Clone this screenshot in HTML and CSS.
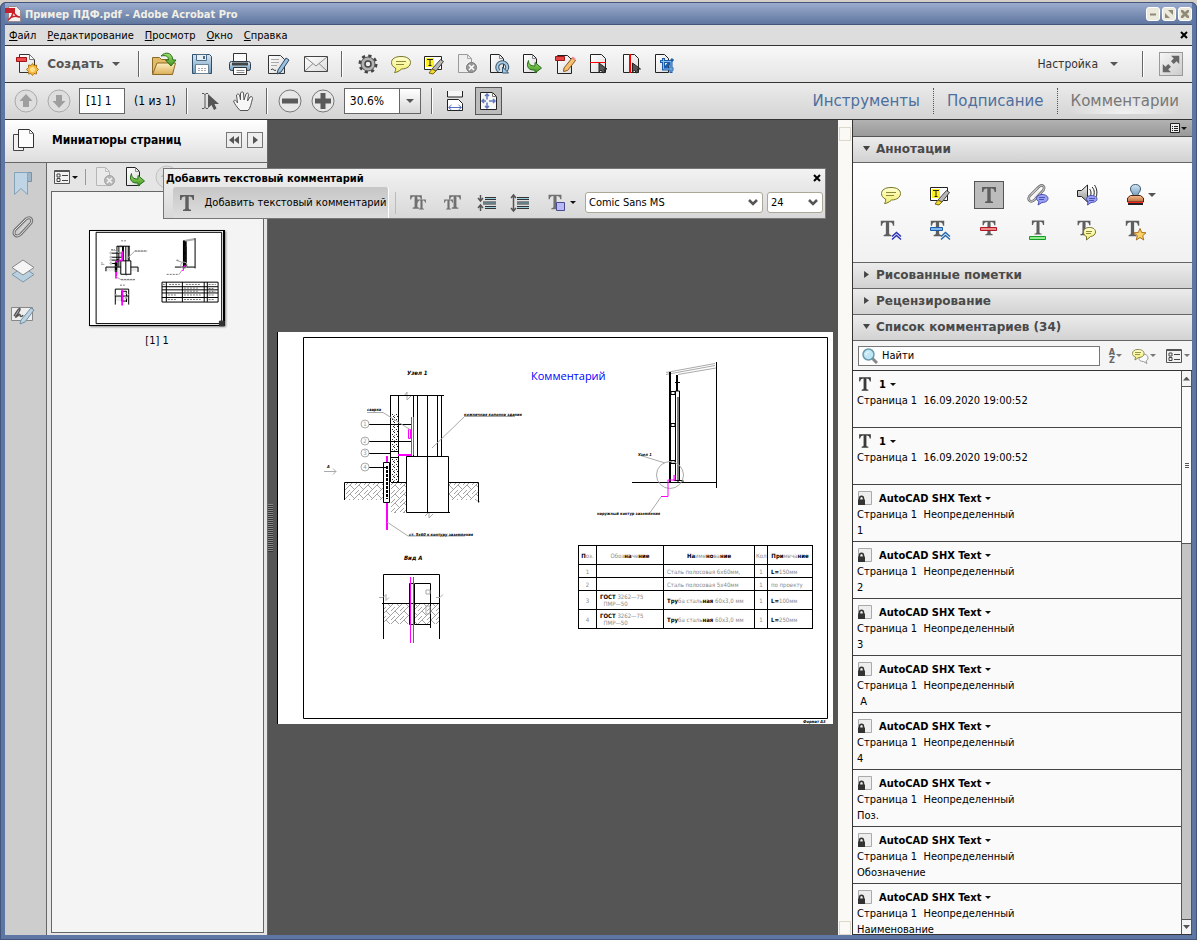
FILE: index.html
```html
<!DOCTYPE html>
<html lang="ru">
<head>
  <meta charset="UTF-8">
  <title>Пример ПДФ.pdf - Adobe Acrobat Pro</title>
  <link rel="stylesheet" href="styles.css">
</head>
<body>

  <!-- Общие градиенты и значки -->
  <svg class="sprite" aria-hidden="true">
    <defs>
      <linearGradient id="gPaper" x1="0" y1="0" x2="1" y2="1"><stop offset="0" stop-color="#fff"/><stop offset="1" stop-color="#dcdcdc"/></linearGradient>
      <linearGradient id="gGray" x1="0" y1="0" x2="0" y2="1"><stop offset="0" stop-color="#f6f6f6"/><stop offset="1" stop-color="#8c8c8c"/></linearGradient>
      <linearGradient id="gBlue" x1="0" y1="0" x2="0" y2="1"><stop offset="0" stop-color="#d5e6f2"/><stop offset="1" stop-color="#6f9cc0"/></linearGradient>
      <linearGradient id="gYellow" x1="0" y1="0" x2="0" y2="1"><stop offset="0" stop-color="#ffffd0"/><stop offset="1" stop-color="#f3ee70"/></linearGradient>
      <linearGradient id="gFolder" x1="0" y1="0" x2="0" y2="1"><stop offset="0" stop-color="#fbefc0"/><stop offset="1" stop-color="#dcae58"/></linearGradient>
      <linearGradient id="gGreen" x1="0" y1="0" x2="0" y2="1"><stop offset="0" stop-color="#a5e070"/><stop offset="1" stop-color="#3d9420"/></linearGradient>
      <linearGradient id="gStamp" x1="0" y1="0" x2="0" y2="1"><stop offset="0" stop-color="#f3bd94"/><stop offset="1" stop-color="#c06a38"/></linearGradient>
      <pattern id="hatch" width="9" height="9" patternUnits="userSpaceOnUse"><path d="M0 9L9 0M0 0L4.500 4.500M5 9l4-4" stroke="#999" stroke-width=".9" fill="none"/></pattern>
      <pattern id="speckle" width="4" height="5" patternUnits="userSpaceOnUse"><path d="M0 .5h1M2 2.500h1M3 4.500h1" stroke="#222"/><path d="M0 3.500h1" stroke="#888"/></pattern>
    </defs>

    <symbol id="i-pdf" viewBox="0 0 16 16"><path d="M3.500 0.500h8l4 4v11h-12z" fill="#f4f0ee" stroke="#9a8a8a"/><path d="M0 2h10v5H0z" fill="#c8202a"/><path d="M7 3c2 5 4 8 8 8M8 5c0 4-2 7-5 9M5 12c3-2 6-2 9-1" fill="none" stroke="#c8202a" stroke-width="1.500"/></symbol>
    <symbol id="i-create" viewBox="0 0 24 24"><path d="M4.500 2.500h10l5 5v13h-15z" fill="url(#gPaper)" stroke="#333"/><path d="M14.500 2.500v5h5z" fill="#fff" stroke="#777"/><path d="M1.500 5.500h10v4h-10z" fill="#ee4a4a" stroke="#9e1515"/><path d="M17.500 11.500l1.500 2 2.500-.5v2.500l2 2-2 2V22l-2.500-.5-1.500 2-1.500-2-2.500.5v-2.500l-2-2 2-2V13l2.500.5z" fill="#f5b840" stroke="#b07818"/><circle cx="17.500" cy="17.500" r="2.500" fill="#ffe08a"/></symbol>
    <symbol id="i-open" viewBox="0 0 26 26"><path d="M1.500 23V6.500h7l2 2h11V23z" fill="#e3bb66" stroke="#8c6a28"/><path d="M1.500 23.500L6 12h18.500l-3 11.500z" fill="url(#gFolder)" stroke="#8c6a28"/><path d="M10 5c4-4.500 11-4 12 4h3l-5 6-5.500-6h3c0-4-3-5-7.500-4z" fill="url(#gGreen)" stroke="#28701a"/></symbol>
    <symbol id="i-save" viewBox="0 0 24 24"><path d="M2.500 2.500h17l2 2v17h-19z" fill="url(#gBlue)" stroke="#2d4d68"/><path d="M6.500 2.500h10v6h-10z" fill="#e7eef4" stroke="#4c6a85"/><path d="M13 4h2v3h-2z" fill="#4c6a85"/><path d="M5.500 12.500h13v9h-13z" fill="#fff" stroke="#6b8399"/><path d="M8 16.500h8M8 18.500h8" stroke="#aaa" stroke-dasharray="2 1"/></symbol>
    <symbol id="i-print" viewBox="0 0 24 24"><path d="M5.500 1.500h13v10h-13z" fill="#fafafa" stroke="#333"/><rect x="1.500" y="9.500" width="21" height="9" rx="2" fill="url(#gBlue)" stroke="#2f3f4e"/><path d="M4 12h16" stroke="#444" stroke-width="3"/><path d="M5.500 15.500h13v7h-13z" fill="#fff" stroke="#333"/><path d="M8.500 18.500h8M8.500 20.500h8" stroke="#888"/></symbol>
    <symbol id="i-edit" viewBox="0 0 24 24"><path d="M2.500 3.500h12l4 4v14h-16z" fill="url(#gPaper)" stroke="#333"/><path d="M5 7.500h8M5 10.500h8M5 13.500h6" stroke="#aaa"/><path d="M12 18l8-12 3 2-8 12-4 2z" fill="#9cc2e0" stroke="#2b4a66"/><path d="M5 18c2-3 3 2 5 0" fill="none" stroke="#222"/></symbol>
    <symbol id="i-mail" viewBox="0 0 26 24"><path d="M1.500 4.500h23v15h-23z" fill="url(#gPaper)" stroke="#444"/><path d="M2 5l11 9 11-9M2 19l8-7.500M24 19l-8-7.500" fill="none" stroke="#8a8a8a"/></symbol>
    <symbol id="i-gear" viewBox="0 0 24 24"><circle cx="12" cy="12" r="8" fill="none" stroke="#444" stroke-width="3" stroke-dasharray="3.200 3.080"/><circle cx="12" cy="12" r="7" fill="#b2b2b2" stroke="#555"/><circle cx="12" cy="12" r="3" fill="#eee" stroke="#444" stroke-width="1.500"/></symbol>
    <symbol id="i-note" viewBox="0 0 24 24"><path d="M12 4.500c6 0 9.500 2.500 9.500 6s-3.500 6.500-9 6.500c-2 2-5 3.500-7 3.500 1-1.500 1.500-3 1-4.500-2.500-1-4-3-4-5.500 0-3.500 3.500-6 9.500-6z" fill="url(#gYellow)" stroke="#77742a"/><path d="M7 9.500h10M7 12.500h8" stroke="#8c883a"/></symbol>
    <symbol id="i-mark" viewBox="0 0 24 24"><path d="M2.500 4.500h17v13h-17z" fill="#fff" stroke="#222"/><path d="M4 6h8v9H4z" fill="#fff022"/><path d="M5 7.500h6M8 7.500v6M6.500 13.500h3" stroke="#222"/><path d="M10 17L18.500 7.500l3 2L14 19z" fill="#b8b8b8" stroke="#444"/><path d="M7 21l3-4 4 2-3 3z" fill="#f2d92e" stroke="#776511"/></symbol>
    <symbol id="i-delete" viewBox="0 0 24 24"><path d="M3.500 2.500h9l4 4v14h-13z" fill="#eee" stroke="#999"/><path d="M12.500 2.500v4h4" fill="none" stroke="#aaa"/><circle cx="16.500" cy="15.500" r="5" fill="#999" stroke="#777"/><path d="M14 13l5 5M19 13l-5 5" stroke="#fff" stroke-width="1.500"/></symbol>
    <symbol id="i-rotate" viewBox="0 0 24 24"><path d="M2.500 2.500h9l4 4v14h-13z" fill="url(#gPaper)" stroke="#222"/><path d="M11.500 2.500v4h4" fill="none" stroke="#888"/><path d="M11 19a5 5 0 1 1 7-.5" fill="none" stroke="#36566f" stroke-width="4"/><path d="M11 19a5 5 0 1 1 7-.5" fill="none" stroke="#a9c9e0" stroke-width="2"/><path d="M14.500 15v6h6z" fill="#a9c9e0" stroke="#36566f"/></symbol>
    <symbol id="i-extract" viewBox="0 0 24 24"><path d="M2.500 2.500h9l4 4v14h-13z" fill="url(#gPaper)" stroke="#222"/><path d="M11.500 2.500v4h4" fill="none" stroke="#888"/><path d="M7.500 8.500c0 4 2 5.500 6.500 5.500v-3.500l6.500 5.500-6.500 5v-3c-6 .5-9.500-3-6.500-9.500z" fill="url(#gGreen)" stroke="#28701a"/></symbol>
    <symbol id="i-pencil" viewBox="0 0 24 24"><path d="M3.500 3.500h10l4 4v14h-14z" fill="url(#gPaper)" stroke="#222"/><path d="M1.500 4.500h9v4h-9z" fill="#e24444" stroke="#a01515"/><path d="M10 16l8-10 3.500 2.500-8 10-4 1z" fill="#f5c074" stroke="#8c5718"/><path d="M17.500 6l1.500-1.500 3 2.500-1.500 1.500z" fill="#ee8f8f"/></symbol>
    <symbol id="i-splith" viewBox="0 0 24 24"><path d="M3.500 2.500h11l4 4v14h-15z" fill="url(#gPaper)" stroke="#222"/><path d="M3 10.500h16" stroke="#f00"/><path d="M12 11v9l2-2 2 3 2-1-1-3h3z" fill="#555" stroke="#222"/></symbol>
    <symbol id="i-splitv" viewBox="0 0 24 24"><path d="M3.500 2.500h11l4 4v14h-15z" fill="url(#gPaper)" stroke="#222"/><path d="M10 2v19" stroke="#f00" stroke-width="2"/><path d="M12.500 11v9l2-2 2 3 2-1-1-3h3z" fill="#555" stroke="#222"/></symbol>
    <symbol id="i-crop" viewBox="0 0 24 24"><path d="M2.500 2.500h9l4 4v14h-13z" fill="url(#gPaper)" stroke="#222"/><path d="M10.500 6v11h10M7 9.500h11V21M20 7l-8 9" fill="none" stroke="#1d5ca8" stroke-width="3"/><path d="M10.500 7v10H20M8 9.500h10V20" fill="none" stroke="#85bdf0"/></symbol>
    <symbol id="i-expand" viewBox="0 0 24 24"><path d="M12 3h9v9l-3-3-3 3-3-3 3-3zM12 21H3v-9l3 3 3-3 3 3-3 3z" fill="#666"/></symbol>
    <symbol id="i-up" viewBox="0 0 24 24"><circle cx="12" cy="12" r="11" fill="#dedede" stroke="#aaa"/><path d="M12 5l6.500 7H15v6H9v-6H5.500z" fill="#9e9e9e"/></symbol>
    <symbol id="i-down" viewBox="0 0 24 24"><circle cx="12" cy="12" r="11" fill="#dedede" stroke="#aaa"/><path d="M12 19l6.500-7H15V6H9v6H5.500z" fill="#9e9e9e"/></symbol>
    <symbol id="i-minus" viewBox="0 0 24 24"><circle cx="12" cy="12" r="11" fill="#e8e8e8" stroke="#777"/><path d="M4 9.500h16v5H4z" fill="#5a5a5a"/></symbol>
    <symbol id="i-plus" viewBox="0 0 24 24"><circle cx="12" cy="12" r="11" fill="#e8e8e8" stroke="#777"/><path d="M4 9.500h5.500V4h5v5.500H20v5h-5.500V20h-5v-5.500H4z" fill="#5a5a5a"/></symbol>
    <symbol id="i-select" viewBox="0 0 24 24"><path d="M4 4.500h2l1 1 1-1h2M7 5v14M4 19.500h2l1-1 1 1h2" fill="none" stroke="#555"/><path d="M10 5v14l3.500-3 2.500 5 2.500-1.500-2-4.500h4.500z" fill="#555"/></symbol>
    <symbol id="i-hand" viewBox="0 0 24 24"><path d="M9 21.500C6 18 3.500 15 2.500 12c1.500-1.500 3-.5 4 2L5.500 6c1-1.500 2.500-1 3 0l1 5V4c1-1.500 2.500-1.500 3 0l.5 7L15 5c1-1.500 2.500-1 2.500.5L16.500 12l2.500-4c1.500-1 3 0 2.500 1.500C20 15 19.500 19 17 21.500z" fill="#f7f7f7" stroke="#555"/></symbol>
    <symbol id="i-fitwidth" viewBox="0 0 24 24"><path d="M4.500 2v6h15V2" fill="#f6f6f6" stroke="#222"/><path d="M4.500 21.500v-11h11l4 4v7z" fill="#fff" stroke="#222"/><path d="M6 18.500h12M8.500 16l-3 2.500 3 2.500M15.500 16l3 2.500-3 2.500" fill="none" stroke="#5570c0"/></symbol>
    <symbol id="i-fitpage" viewBox="0 0 24 24"><path d="M4.500 3.500h12l4 4v13h-16z" fill="#f6f6f6" stroke="#222"/><path d="M16.500 3.500v4h4" fill="none" stroke="#777"/><path d="M11 5.500v5M11 13.500v5M6 12h4M13 12h6M9 7l2-2 2 2M9 17l2 2 2-2M8 10l-2 2 2 2M17 10l2 2-2 2" fill="none" stroke="#6078c0" stroke-width="1.500"/></symbol>

    <symbol id="i-pages" viewBox="0 0 24 24"><path d="M1.500 6.500h10v16h-10z" fill="#f1f1f1" stroke="#444"/><path d="M6.500 1.500h11l4 4v14h-15z" fill="#fdfdfd" stroke="#333"/><path d="M17.500 1.500v4h4" fill="none" stroke="#888"/></symbol>
    <symbol id="i-bookmark" viewBox="0 0 24 24"><path d="M14.500 1.500h6v9h-4z" fill="#9fb6c8" stroke="#7893a9"/><path d="M3.500 1.500h12c2 0 1 2 1 4v18l-6.500-6-6.500 6z" fill="#bfd5e5" stroke="#84a2b8"/></symbol>
    <symbol id="i-clip" viewBox="0 0 24 24"><path d="M6 13L15 4c4-3 7 0 5 4L10 19c-4 4-9 1-6-4l9-9" fill="none" stroke="#767676" stroke-width="3"/><path d="M6 13L15 4c4-3 7 0 5 4L10 19c-4 4-9 1-6-4l9-9M15 9l-6 7" fill="none" stroke="#ddd"/></symbol>
    <symbol id="i-layers" viewBox="0 0 24 24"><path d="M12 8l11 7.500L12 23 1 15.500z" fill="#b8d0e0" stroke="#7d97a9"/><path d="M12 1l11 7.500L12 16 1 8.500z" fill="#f5f5f5" stroke="#888"/></symbol>
    <symbol id="i-sign" viewBox="0 0 24 24"><path d="M.5 4.500h21v13H.5z" fill="#eee" stroke="#888"/><path d="M3 13c2-3 5-9 6-7 0 3-6 9-4 8s4-4 4-2 2 2 3 0" fill="none" stroke="#555" stroke-width="1.500"/><path d="M10 17L20 5l3 2-9 12-5 2z" fill="#bcd3e2" stroke="#7490a5"/></symbol>
    <symbol id="i-list" viewBox="0 0 18 16"><path d="M1.500 1.500h15v13h-15z" fill="#f2f2f2" stroke="#555"/><path d="M1.500 2.500h15" stroke="#555"/><path d="M4 5h3v3H4zM4 9.500h3v3H4z" fill="none" stroke="#444"/><path d="M9 6.500h6M9 11.500h6" stroke="#444"/></symbol>
    <symbol id="i-menu" viewBox="0 0 10 10"><path d="M.5.5h9v9h-9z" fill="#eee" stroke="#222"/><path d="M2 3.500h1M4 3.500h4M2 5.500h1M4 5.500h4M2 7.500h1M4 7.500h4" stroke="#222"/></symbol>

    <symbol id="i-t" viewBox="0 0 24 24"><path d="M5 4h14v5h-1.300c-.4-2.500-1-3.500-4-3.500V17c0 1.500.8 1.500 2.300 1.800V20H8v-1.200c1.500-.3 2.300-.3 2.300-1.800V5.500c-3 0-3.600 1-4 3.500H5z" fill="currentColor"/></symbol>
    <symbol id="i-clipnote" viewBox="0 0 24 24"><use href="#i-clip" width="21" height="21"/><path d="M16 11.500c4 0 6 2 6 4s-2 4-6 4l-4 2.500 1-3.500c-2-1-2.500-2-2.500-3 0-2 2-4 5.500-4z" fill="#9aa0f4" stroke="#4a50b0"/><path d="M13 14.500h6M13 16.500h5" stroke="#4a50b0"/></symbol>
    <symbol id="i-sound" viewBox="0 0 24 24"><path d="M2.500 7.500h4L12.500 2v17l-6-5.500h-4z" fill="url(#gGray)" stroke="#222"/><path d="M14.500 6c2 2 2 6 0 8M17 4c3 3 3 8 0 11M19.500 2c3 4 3 10 1 13" fill="none" stroke="#222"/><path d="M16 12.500c4 0 6 1.500 6 3.500s-2 3.500-6 3.500l-3.500 2.500.5-3.500c-1-1-1.500-1.500-1.500-2.500 0-2 2-3.500 4.500-3.500z" fill="#9aa0f4" stroke="#4a50b0"/><path d="M14 15.500h6M14 17.500h5" stroke="#4a50b0"/></symbol>
    <symbol id="i-stamp" viewBox="0 0 24 24"><path d="M11.500 1.500c3.500 0 5 2 5 4.500 0 3-2.500 4-3 7h-4c-.5-3-3-4-3-7 0-2.500 1.500-4.500 5-4.500z" fill="url(#gBlue)" stroke="#3e5b73"/><path d="M3.500 19v-4l3-2.500h10l3 2.500v4z" fill="url(#gStamp)" stroke="#4d2410"/><path d="M4 19.500h15" stroke="#f22"/><path d="M4 21h15" stroke="#222" stroke-width="2"/></symbol>
    <symbol id="i-tinsert" viewBox="0 0 24 24"><use href="#i-t" x="-3" y="-2" width="23" height="23"/><path d="M13 17.500l4.500-4 4.500 4M13 20.500l4.500-4 4.500 4" fill="none" stroke="#2a30b8" stroke-width="1.500"/></symbol>
    <symbol id="i-treplace" viewBox="0 0 24 24"><use href="#i-t" x="-2" y="-2" width="23" height="23"/><path d="M2.500 8.500h12v3h-12z" fill="#7fb6ee" stroke="#1d5ca8"/><path d="M13 17.500l4.500-4 4.500 4M13 20.500l4.500-4 4.500 4" fill="none" stroke="#2468b0" stroke-width="1.500"/></symbol>
    <symbol id="i-tstrike" viewBox="0 0 24 24"><use href="#i-t" y="-2" width="24" height="22"/><path d="M3.500 8.500h16v3h-16z" fill="#f08a8a" stroke="#b01828"/></symbol>
    <symbol id="i-tunder" viewBox="0 0 24 24"><use href="#i-t" y="-2" width="24" height="21"/><path d="M3.500 17.500h16v3h-16z" fill="#8fec8f" stroke="#159a28"/></symbol>
    <symbol id="i-tnote" viewBox="0 0 24 24"><use href="#i-t" x="-2" y="-2" width="22" height="22"/><path d="M14.500 8.500c4 0 6 2 6 4.500s-2 4-5 4.500l-4 3.500v-3.500c-2-1-3-2-3-4.500s2-4.500 6-4.500z" fill="url(#gYellow)" stroke="#77742a"/><path d="M11 12.500h6M11 14.500h5" stroke="#8c883a"/></symbol>
    <symbol id="i-tstar" viewBox="0 0 24 24"><use href="#i-t" x="-3" y="-2" width="23" height="23"/><path d="M16 9.500l1.700 4 4.300.3-3.300 2.800 1 4.400L16 18.500 12.300 21l1-4.400-3.300-2.800 4.300-.3z" fill="#fbd26a" stroke="#a8721a"/></symbol>
    <symbol id="i-search" viewBox="0 0 16 16"><path d="M10 10l5 5" stroke="#888" stroke-width="3"/><circle cx="6.500" cy="6.500" r="5.500" fill="#bfe6f4" stroke="#6b9aae" stroke-width="1.500"/><path d="M4 7c0-2 1-3 3-3" stroke="#fff" fill="none"/></symbol>
    <symbol id="i-filter" viewBox="0 0 18 16"><path d="M12 6c3 0 5 1.500 5 4 0 1.500-1 2.500-2 3l1 2.500-3.500-2c-3 0-4.500-1-4.500-3.500S9.500 6 12 6z" fill="#fafafa" stroke="#999"/><path d="M7 1.500c4 0 6 1.500 6 4s-2 4-5.500 4L4 12l.5-3c-2-.5-3-2-3-3.500 0-2.500 2-4 5.500-4z" fill="url(#gYellow)" stroke="#8c8850"/><path d="M4 4.500h6M4 6.500h5" stroke="#99954a"/></symbol>
    <symbol id="i-lock" viewBox="0 0 16 16"><path d="M1.500 1.500h13v13h-13z" fill="#eee" stroke="#aaa"/><path d="M2.500 10V8.500c0-3 4-3 4 0V10" fill="none" stroke="#333" stroke-width="1.500"/><path d="M1 9.500h7V15H1z" fill="#333"/></symbol>
    <symbol id="i-arrow" viewBox="0 0 8 4"><path d="M0 0h8L4 4z" fill="currentColor"/></symbol>
    <symbol id="i-chev" viewBox="0 0 10 8"><path d="M1 1l4 4 4-4" fill="none" stroke="#555" stroke-width="2.500"/></symbol>
    <symbol id="i-cross" viewBox="0 0 8 8"><path d="M1 1l6 6M7 1L1 7" stroke="currentColor" stroke-width="2"/></symbol>

    <!-- Чертёж листа, координаты в единицах листа 555 x 392 -->
    <symbol id="drawing" viewBox="0 0 555 392">
      <g class="ink">
        <path d="M25.500 5.500h524v381h-524z"/>
        <path class="soft" d="M147 184l4-4v6l4-4M126 64l3-4v8l4-4M198 168l4 2"/>
        <path fill="url(#speckle)" stroke="none" d="M113 81h7v38h-7zM113 125h7v25h-7z"/>
        <path fill="url(#hatch)" stroke="none" d="M67 151h38v17H67zM113 151h15v30h-15zM170 151h31v17h-31zM106 272h25v20h-25zM137 272h24v20h-24z"/>
        <path d="M112 63.500h54M112.500 63v87M120.500 63v87M135.500 63v61M139.500 63v61M149.500 63v117M159.500 63v61M163.500 63v61M112 119.500h8M112 125.500h8"/>
        <path d="M172 180.500h-43.500v-56h42v56M66.500 168v-17.500h40M113 150.500h16M170 150.500h30.500v20"/>
        <path d="M105.500 130.500h6v40h-6z" fill="#fff"/>
        <path d="M91 92.500h42M91 109.500h42M91 121.500h21M91 135.500h18"/>
        <path class="dash" d="M109 134v33"/>
        <path class="pink wide" d="M109 124v6M109 171v27M120 123h14"/>
        <path class="pink" d="M133.500 85v38M135.500 85v38M130.500 97.500h2v9h-2z"/>
        <path class="soft" d="M89 80.500h16l27 17M186 84.500h51M186 85l-32 31M109 190l21 14h57M46 139.500h12l-3-3m3 3l-3 3"/>
        <circle class="soft" cx="87" cy="92" r="4"/><circle class="soft" cx="87" cy="109" r="4"/><circle class="soft" cx="87" cy="121" r="4"/><circle class="soft" cx="87" cy="135" r="4"/>
        <path d="M105.500 307v-64.500h56V307M104 271.500h57M131.500 251.500h5v41h-5zM137 251.500h15.500V296M137 292.500h16"/>
        <path class="pink" d="M132.500 245v66M135.500 245v66"/>
        <path class="soft" d="M101 265.500h4l3-3v6l3-3M158 265.500h4l3-3M148 258h4v4h-4zM148 274h4v8h-4z"/>
        <path class="soft" d="M388 40.500l49-9M388 42.500l49-9M400 42.500l38-6.500M361 123l26 8M371 182l12-17"/>
        <path class="wide" d="M392 40v111"/><path class="wide" d="M399 43v16"/>
        <path d="M397.500 148v-89h4v89M400 65v85M354 150.500h84M438.500 30v126M393 59.500h4v3h-4zM393 91.500h4v3h-4zM393 128.500h4v3h-4zM396 148.500h9v2M397 50.500h5"/>
        <circle class="soft" cx="392" cy="143" r="13.500"/>
        <path class="pink" d="M397 143v5h-7v16.500h-7"/>
        <path class="pink" d="M396 143v6"/>
      </g>
    </symbol>
  </svg>

  <div class="window">

    <header class="title-bar">
      <svg class="app-icon"><use href="#i-pdf"/></svg>
      <h1>Пример ПДФ.pdf - Adobe Acrobat Pro</h1>
      <button type="button" class="win-btn" aria-label="Свернуть"><svg viewBox="0 0 10 10"><path d="M2 4.500h6v2H2z"/></svg></button>
      <button type="button" class="win-btn" aria-label="Восстановить"><svg viewBox="0 0 10 10"><path d="M4 1h5v5zM1 4v5h5z"/></svg></button>
      <button type="button" class="win-btn" aria-label="Закрыть"><svg viewBox="0 0 10 10"><path d="M1 1h2l2 2 2-2h2v2L7 5l2 2v2H7L5 7 3 9H1V7l2-2-2-2z"/></svg></button>
    </header>

    <nav class="menu-bar">
      <a href="#"><u>Ф</u>айл</a>
      <a href="#"><u>Р</u>едактирование</a>
      <a href="#"><u>П</u>росмотр</a>
      <a href="#"><u>О</u>кно</a>
      <a href="#"><u>С</u>правка</a>
      <button type="button" class="close" aria-label="Закрыть документ"><svg><use href="#i-cross"/></svg></button>
    </nav>

    <!-- Первая панель инструментов -->
    <div class="toolbar top">
      <button type="button" class="create"><svg class="ico"><use href="#i-create"/></svg>Создать<svg class="arrow"><use href="#i-arrow"/></svg></button>
      <span class="sep"></span>
      <div class="group files">
        <button type="button" aria-label="Открыть"><svg class="ico big"><use href="#i-open"/></svg></button>
        <button type="button" aria-label="Сохранить"><svg class="ico"><use href="#i-save"/></svg></button>
        <button type="button" aria-label="Печать"><svg class="ico"><use href="#i-print"/></svg></button>
        <button type="button" aria-label="Подписать"><svg class="ico"><use href="#i-edit"/></svg></button>
        <button type="button" aria-label="Отправить"><svg class="ico big"><use href="#i-mail"/></svg></button>
      </div>
      <span class="sep"></span>
      <div class="group">
        <button type="button" aria-label="Параметры"><svg class="ico"><use href="#i-gear"/></svg></button>
        <button type="button" aria-label="Записка"><svg class="ico"><use href="#i-note"/></svg></button>
        <button type="button" aria-label="Выделить текст"><svg class="ico"><use href="#i-mark"/></svg></button>
        <button type="button" aria-label="Удалить страницу" disabled><svg class="ico"><use href="#i-delete"/></svg></button>
        <button type="button" aria-label="Повернуть"><svg class="ico"><use href="#i-rotate"/></svg></button>
        <button type="button" aria-label="Извлечь"><svg class="ico"><use href="#i-extract"/></svg></button>
        <button type="button" aria-label="Редактировать"><svg class="ico"><use href="#i-pencil"/></svg></button>
        <button type="button" aria-label="Разделить по горизонтали"><svg class="ico"><use href="#i-splith"/></svg></button>
        <button type="button" aria-label="Разделить по вертикали"><svg class="ico"><use href="#i-splitv"/></svg></button>
        <button type="button" aria-label="Обрезать"><svg class="ico"><use href="#i-crop"/></svg></button>
      </div>
      <button type="button" class="customize">Настройка<svg class="arrow"><use href="#i-arrow"/></svg></button>
      <span class="sep"></span>
      <button type="button" class="expand" aria-label="Режим чтения"><svg><use href="#i-expand"/></svg></button>
    </div>

    <!-- Вторая панель: навигация и масштаб -->
    <div class="toolbar nav">
      <div class="group">
        <button type="button" aria-label="Назад" disabled><svg class="ico"><use href="#i-up"/></svg></button>
        <button type="button" aria-label="Вперёд" disabled><svg class="ico"><use href="#i-down"/></svg></button>
      </div>
      <input class="page-num" type="text" value="[1] 1" aria-label="Номер страницы">
      <span class="page-count">(1 из 1)</span>
      <span class="sep"></span>
      <div class="group tools">
        <button type="button" aria-label="Выделение"><svg class="ico"><use href="#i-select"/></svg></button>
        <button type="button" aria-label="Рука"><svg class="ico"><use href="#i-hand"/></svg></button>
      </div>
      <span class="sep"></span>
      <div class="group tools">
        <button type="button" aria-label="Уменьшить"><svg class="ico"><use href="#i-minus"/></svg></button>
        <button type="button" aria-label="Увеличить"><svg class="ico"><use href="#i-plus"/></svg></button>
      </div>
      <div class="zoom">
        <input type="text" value="30.6%" aria-label="Масштаб">
        <button type="button" aria-label="Выбрать масштаб"><svg class="arrow"><use href="#i-arrow"/></svg></button>
      </div>
      <span class="sep"></span>
      <div class="group tools">
        <button type="button" aria-label="По ширине"><svg class="ico"><use href="#i-fitwidth"/></svg></button>
        <button type="button" class="pressed" aria-label="По странице"><svg class="ico"><use href="#i-fitpage"/></svg></button>
      </div>
      <div class="tabs">
        <a href="#">Инструменты</a>
        <a href="#">Подписание</a>
        <a href="#" class="current">Комментарии</a>
      </div>
    </div>

    <main class="workspace">

      <!-- Миниатюры -->
      <aside class="side">
        <div class="side-head">
          <svg class="ico"><use href="#i-pages"/></svg>
          <h2>Миниатюры страниц</h2>
          <button type="button" aria-label="Свернуть"><svg viewBox="0 0 12 12"><path d="M6 2v8L1 6zM11 2v8L6 6z"/></svg></button>
          <button type="button" aria-label="Развернуть"><svg viewBox="0 0 12 12"><path d="M4 2v8l5-4z"/></svg></button>
        </div>
        <div class="side-body">
          <div class="side-tabs">
            <button type="button" aria-label="Закладки"><svg class="ico"><use href="#i-bookmark"/></svg></button>
            <button type="button" aria-label="Вложения"><svg class="ico"><use href="#i-clip"/></svg></button>
            <button type="button" aria-label="Слои"><svg class="ico"><use href="#i-layers"/></svg></button>
            <button type="button" aria-label="Подписи"><svg class="ico"><use href="#i-sign"/></svg></button>
          </div>
          <div class="thumbs">
            <div class="thumb-tools">
              <button type="button" class="menu" aria-label="Параметры"><svg class="list-ico"><use href="#i-list"/></svg><svg class="arrow small"><use href="#i-arrow"/></svg></button>
              <span class="thin-sep"></span>
              <button type="button" class="off" aria-label="Удалить" disabled><svg class="ico"><use href="#i-delete"/></svg></button>
              <button type="button" aria-label="Извлечь"><svg class="ico"><use href="#i-extract"/></svg></button>
              <button type="button" class="off" aria-label="Повернуть влево" disabled><svg class="ico"><use href="#i-up"/></svg></button>
            </div>
            <div class="thumb-list">
              <figure class="thumb">
                <svg class="thumb-page" viewBox="0 0 555 392">
                  <use href="#drawing" width="555" height="392"/>
                  <g class="ink">
                    <path d="M300.500 213.500h234v83h-234zM300 232.500h234M300 245.500h234M300 258.500h234M300 277.500h234M318.500 213v83M385.500 213v83M476.500 213v83M489.500 213v83"/>
                    <path class="blur" d="M130 41h20M88 78h16M187 83h52M130 202h58M125 226h20M361 122h10M320 181h51M330 223h45M400 223h60M495 223h30M392 238h60M392 251h60M392 267h70M392 286h70M325 267h35M325 286h35M495 240h20M495 252h28M495 267h22M495 286h22M304 223h8M47 133h5"/>
                    <path d="M540 376h20v20h-20z" fill="#333" stroke="#333"/>
                  </g>
                </svg>
                <figcaption>[1] 1</figcaption>
              </figure>
            </div>
          </div>
        </div>
      </aside>

      <!-- Документ -->
      <section class="document">
        <div class="grip-col"><span class="grip"></span></div>
        <svg class="page" viewBox="0 0 555 392">
          <use href="#drawing" width="555" height="392"/>
          <g class="cad-text">
            <text x="129" y="43">Узел 1</text>
            <text x="126" y="228">Вид А</text>
            <g class="tiny">
              <text x="89" y="79">сварка</text>
              <text x="186" y="84">кожничная колонна здания</text>
              <text x="131" y="204">ст. 5х60 к контуру заземления</text>
              <text x="49" y="136">А</text>
              <text x="360" y="124">Узел 1</text>
              <text x="319" y="183">наружный контур заземления</text>
              <text x="525" y="391">Формат А3</text>
            </g>
            <g class="num">
              <text x="87" y="94">1</text><text x="87" y="111">2</text><text x="87" y="123">3</text><text x="87" y="137">4</text>
            </g>
          </g>
          <text class="comment-text" x="253" y="48">Комментарий</text>
          <foreignObject x="300" y="213" width="236" height="86">
            <table class="parts">
              <thead>
                <tr><th class="c-pos"><b>П</b>оз.</th><th class="c-code">Обоз<b>на</b>че<b>ние</b></th><th class="c-name"><b>На</b>име<b>но</b>ва<b>ние</b></th><th class="c-pos">Кол</th><th class="c-note"><b>При</b>меча<b>ние</b></th></tr>
              </thead>
              <tbody>
                <tr><td>1</td><td></td><td>Сталь полосовая 6х60мм,</td><td>1</td><td><b>L=</b>150мм</td></tr>
                <tr><td>2</td><td></td><td>Сталь полосовая 5х40мм</td><td>1</td><td>по проекту</td></tr>
                <tr class="tall"><td>3</td><td><b>ГОСТ</b> 3262—75<br>&nbsp; ПМР—50</td><td><b>Тру</b>ба сталь<b>ная</b> 60х3,0 мм</td><td>1</td><td><b>L=</b>100мм</td></tr>
                <tr class="tall"><td>4</td><td><b>ГОСТ</b> 3262—75<br>&nbsp; ПМР—50</td><td><b>Тру</b>ба сталь<b>ная</b> 60х3,0 мм</td><td>1</td><td><b>L=</b>250мм</td></tr>
              </tbody>
            </table>
          </foreignObject>
        </svg>
        <div class="doc-scroll"><span></span><span></span></div>
      </section>

      <!-- Комментарии -->
      <aside class="comments">
        <div class="panel-strip">
          <button type="button" aria-label="Меню панели"><svg class="strip-ico"><use href="#i-menu"/></svg><svg class="arrow small"><use href="#i-arrow"/></svg></button>
        </div>
        <h2><button type="button" class="fold open">Аннотации</button></h2>
        <div class="tool-grid">
          <button type="button" aria-label="Записка"><svg class="ico"><use href="#i-note"/></svg></button>
          <button type="button" aria-label="Выделение"><svg class="ico"><use href="#i-mark"/></svg></button>
          <button type="button" class="pressed" aria-label="Текстовый комментарий"><svg class="ico"><use href="#i-t"/></svg></button>
          <button type="button" aria-label="Вложить файл"><svg class="ico"><use href="#i-clipnote"/></svg></button>
          <button type="button" aria-label="Звук"><svg class="ico"><use href="#i-sound"/></svg></button>
          <button type="button" aria-label="Штамп"><svg class="ico"><use href="#i-stamp"/></svg></button>
          <button type="button" class="drop" aria-label="Выбрать штамп"><svg class="arrow"><use href="#i-arrow"/></svg></button>
          <button type="button" aria-label="Вставить текст"><svg class="ico"><use href="#i-tinsert"/></svg></button>
          <button type="button" aria-label="Заменить текст"><svg class="ico"><use href="#i-treplace"/></svg></button>
          <button type="button" aria-label="Зачеркнуть"><svg class="ico"><use href="#i-tstrike"/></svg></button>
          <button type="button" aria-label="Подчеркнуть"><svg class="ico"><use href="#i-tunder"/></svg></button>
          <button type="button" aria-label="Примечание к тексту"><svg class="ico"><use href="#i-tnote"/></svg></button>
          <button type="button" aria-label="Исправления"><svg class="ico"><use href="#i-tstar"/></svg></button>
        </div>
        <h2><button type="button" class="fold">Рисованные пометки</button></h2>
        <h2><button type="button" class="fold">Рецензирование</button></h2>
        <h2><button type="button" class="fold open">Список комментариев (34)</button></h2>

        <div class="find-row">
          <label class="find"><svg><use href="#i-search"/></svg><input type="text" value="Найти" aria-label="Найти"></label>
          <button type="button" aria-label="Сортировка"><span class="az">A<br>Z</span><svg class="arrow small"><use href="#i-arrow"/></svg></button>
          <button type="button" aria-label="Фильтр"><svg class="list-ico"><use href="#i-filter"/></svg><svg class="arrow small"><use href="#i-arrow"/></svg></button>
          <button type="button" aria-label="Параметры списка"><svg class="list-ico"><use href="#i-list"/></svg><svg class="arrow small"><use href="#i-arrow"/></svg></button>
        </div>

        <div class="list-wrap">
          <ul class="comment-list">
            <li><h3><svg class="t"><use href="#i-t"/></svg>1<svg class="arrow small"><use href="#i-arrow"/></svg></h3><p>Страница 1&nbsp; 16.09.2020 19:00:52</p></li>
            <li><h3><svg class="t"><use href="#i-t"/></svg>1<svg class="arrow small"><use href="#i-arrow"/></svg></h3><p>Страница 1&nbsp; 16.09.2020 19:00:52</p></li>
            <li><h3><svg><use href="#i-lock"/></svg>AutoCAD SHX Text<svg class="arrow small"><use href="#i-arrow"/></svg></h3><p>Страница 1&nbsp; Неопределенный</p><p>1</p></li>
            <li><h3><svg><use href="#i-lock"/></svg>AutoCAD SHX Text<svg class="arrow small"><use href="#i-arrow"/></svg></h3><p>Страница 1&nbsp; Неопределенный</p><p>2</p></li>
            <li><h3><svg><use href="#i-lock"/></svg>AutoCAD SHX Text<svg class="arrow small"><use href="#i-arrow"/></svg></h3><p>Страница 1&nbsp; Неопределенный</p><p>3</p></li>
            <li><h3><svg><use href="#i-lock"/></svg>AutoCAD SHX Text<svg class="arrow small"><use href="#i-arrow"/></svg></h3><p>Страница 1&nbsp; Неопределенный</p><p>&nbsp;А</p></li>
            <li><h3><svg><use href="#i-lock"/></svg>AutoCAD SHX Text<svg class="arrow small"><use href="#i-arrow"/></svg></h3><p>Страница 1&nbsp; Неопределенный</p><p>4</p></li>
            <li><h3><svg><use href="#i-lock"/></svg>AutoCAD SHX Text<svg class="arrow small"><use href="#i-arrow"/></svg></h3><p>Страница 1&nbsp; Неопределенный</p><p>Поз.</p></li>
            <li><h3><svg><use href="#i-lock"/></svg>AutoCAD SHX Text<svg class="arrow small"><use href="#i-arrow"/></svg></h3><p>Страница 1&nbsp; Неопределенный</p><p>Обозначение</p></li>
            <li><h3><svg><use href="#i-lock"/></svg>AutoCAD SHX Text<svg class="arrow small"><use href="#i-arrow"/></svg></h3><p>Страница 1&nbsp; Неопределенный</p><p>Наименование</p></li>
          </ul>
          <div class="scroll"><span class="sb up"></span><span class="sb-thumb"></span><span class="sb down"></span></div>
        </div>
      </aside>

      <!-- Плавающая панель поверх документа -->
      <div class="float-bar">
        <div class="float-head">
          <h2>Добавить текстовый комментарий</h2>
          <button type="button" aria-label="Закрыть"><svg><use href="#i-cross"/></svg></button>
        </div>
        <div class="float-body">
          <button type="button" class="active"><svg class="ico"><use href="#i-t"/></svg>Добавить текстовый комментарий</button>
          <span class="thin-sep"></span>
          <button type="button" aria-label="Мельче"><svg class="fi" viewBox="0 0 24 24"><use href="#i-t" x="-1" y="1" width="20" height="20"/><use href="#i-t" x="7" y="6" width="15" height="15"/></svg></button>
          <button type="button" aria-label="Крупнее"><svg class="fi" viewBox="0 0 24 24"><use href="#i-t" x="0" y="6" width="15" height="15"/><use href="#i-t" x="4" y="1" width="20" height="20"/></svg></button>
          <button type="button" aria-label="Уменьшить интервал"><svg class="fi" viewBox="0 0 24 24"><path d="M5.500 4v5M3 7l2.500 3L8 7M5.500 20v-5M3 17l2.500-3L8 17" fill="none" stroke="#555" stroke-width="1.500"/><path d="M10 7.500h11M8 12h13M10 16.500h11" stroke="#333" stroke-width="3"/><path d="M10 7.500h11M8 12h13M10 16.500h11" stroke="#9cd"/></svg></button>
          <button type="button" aria-label="Увеличить интервал"><svg class="fi" viewBox="0 0 24 24"><path d="M4.500 4v16M2 7l2.500-3L7 7M2 17l2.500 3L7 17" fill="none" stroke="#555" stroke-width="1.500"/><path d="M8 7.500h12M8 12h12M8 16.500h12" stroke="#333" stroke-width="3"/><path d="M8 7.500h12M8 12h12M8 16.500h12" stroke="#9cd"/></svg></button>
          <button type="button" class="color" aria-label="Цвет текста"><svg class="fi" viewBox="0 0 24 24"><use href="#i-t" x="0" y="0" width="22" height="22"/><path d="M12.500 11.500h8v8h-8z" fill="#b9b9f5" stroke="#4a4a90"/></svg><svg class="arrow small"><use href="#i-arrow"/></svg></button>
          <label class="combo font"><select aria-label="Шрифт"><option>Comic Sans MS</option></select><svg><use href="#i-chev"/></svg></label>
          <label class="combo size"><select aria-label="Размер"><option>24</option></select><svg><use href="#i-chev"/></svg></label>
        </div>
      </div>
    </main>
  </div>

</body>
</html>
```
FILE: styles.css
```css
* {
  box-sizing: border-box;
}

body {
  margin: 0;
  height: 100vh;
  padding-top: 2px;
  overflow: hidden;
  background: #d4d0c8;
  font-family: "DejaVu Sans Condensed", "DejaVu Sans", sans-serif;
  font-size: 11px;
  color: #000;
}

h1, h2, h3, p, ul, figure {
  margin: 0;
  padding: 0;
  font-size: 11px;
}

button, input, select {
  font: inherit;
  color: inherit;
}

button {
  display: flex;
  align-items: center;
  justify-content: center;
  padding: 0;
  border: 0;
  background: none;
  white-space: nowrap;
}

a {
  color: inherit;
  text-decoration: none;
}

svg {
  display: block;
  flex: none;
}

.sprite {
  position: absolute;
  width: 0;
  height: 0;
}

.ico {
  width: 24px;
  height: 24px;
  color: #5e5e5e;
}

.ico.big {
  width: 26px;
  height: 26px;
}

.arrow {
  width: 8px;
  height: 4px;
  color: #555;
}

.arrow.small {
  width: 6px;
  height: 3px;
  color: #111;
}

/* окно */
.window {
  height: 100%;
  display: flex;
  flex-direction: column;
  border: solid #5d76a3;
  border-width: 0 5px 5px;
  border-radius: 6px 6px 0 0;
  background: #5d76a3;
  outline: 1px solid #43557a;
  outline-offset: -1px;
}

.title-bar {
  display: flex;
  align-items: center;
  gap: 2px;
  height: 23px;
  padding-top: 1px;
  border-top: 1px solid #43557a;
  border-bottom: 1px solid #43557a;
  background: linear-gradient(#9cadce, #5f769f);
  color: #f2f0e6;
}

.title-bar h1 {
  flex: 1;
  padding-left: 2px;
}

.app-icon {
  width: 16px;
  height: 16px;
}

.win-btn {
  width: 14px;
  height: 14px;
  border: 1px solid #fff;
  border-radius: 3px;
  background: #ece9dd;
}

.win-btn svg {
  width: 10px;
  height: 10px;
  fill: #8f8b78;
}

.menu-bar {
  display: flex;
  align-items: center;
  gap: 11px;
  height: 21px;
  padding: 0 4px;
  border-bottom: 1px solid #333;
  background: #ddd;
}

.close {
  margin-left: auto;
}

.close svg, .float-head svg {
  width: 8px;
  height: 8px;
}

/* панели инструментов */
.toolbar {
  display: flex;
  align-items: center;
  height: 37px;
  border-bottom: 1px solid #333;
  background: linear-gradient(#f8f8f8, #e4e4e4);
}

.toolbar.nav {
  background: linear-gradient(#ebebeb, #d4d4d4);
}

.sep {
  width: 2px;
  height: 26px;
  border-left: 1px solid #666;
  border-right: 1px solid #fff;
}

.thin-sep {
  width: 1px;
  height: 16px;
  background: #999;
}

.group {
  display: flex;
}

.group button {
  width: 33px;
  height: 28px;
}

.group.files {
  padding: 0 6px 0 5px;
}

.group.files button {
  width: 38px;
}

.top .group:not(.files) {
  padding-left: 8px;
}

.create {
  gap: 8px;
  width: 133px;
  padding-right: 8px;
  font-family: "DejaVu Sans", sans-serif;
  font-size: 12px;
  font-weight: bold;
  color: #555;
}

.customize {
  gap: 12px;
  margin-left: auto;
  margin-right: 24px;
  font-size: 12px;
  color: #333;
}

.expand {
  width: 24px;
  height: 24px;
  margin: 0 9px 0 15px;
  border: 1px solid #999;
  background: linear-gradient(135deg, #f6f6f6, #ccc);
}

.expand svg {
  width: 22px;
  height: 22px;
}

.nav .group:first-child {
  padding: 0 4px;
}

.page-num {
  width: 46px;
  height: 26px;
  border: 1px solid #666;
  padding: 0 6px;
  background: #fff;
  font-size: 12px;
}

.page-count {
  padding: 0 10px 0 9px;
  font-size: 12px;
}

.group.tools {
  padding: 0 6px;
}

.zoom {
  display: flex;
  width: 77px;
  height: 26px;
  border: 1px solid #666;
  background: #fff;
  margin: 0 10px 0 -2px;
}

.zoom input {
  width: 54px;
  border: 0;
  padding: 0 5px;
  background: #fff;
  font-size: 12px;
}

.zoom button {
  flex: 1;
  border-left: 1px solid #666;
  background: linear-gradient(#fff, #d8d8d8);
}

.group button.pressed, .tool-grid .pressed {
  border: 1px solid #555;
  background: #bcbcbc;
}

.nav .pressed {
  width: 27px;
  margin-left: 3px;
}

.tabs {
  display: flex;
  align-items: center;
  margin-left: auto;
  font-family: "DejaVu Sans", sans-serif;
  font-size: 15px;
  color: #4d6f9d;
}

.tabs a {
  padding: 4px 13px;
}

.tabs a + a {
  border-left: 1px dotted #555;
}

.tabs .current {
  color: #777;
  background: radial-gradient(ellipse at 50% 110%, #f4f4f4, transparent 60%);
}

/* рабочая область */
.workspace {
  position: relative;
  flex: 1;
  min-height: 0;
  display: flex;
  background: #555;
}

.side {
  flex: none;
  width: 263px;
  display: flex;
  flex-direction: column;
  border-right: 1px solid #666;
  background: #e5e5e5;
}

.side-head {
  display: flex;
  align-items: center;
  height: 43px;
  padding: 0 4px 2px 7px;
  border-bottom: 1px solid #666;
  background: linear-gradient(#fff, #dedede);
}

.side-head h2 {
  flex: 1;
  padding-left: 16px;
  font-size: 12px;
}

.side-head button {
  width: 16px;
  height: 16px;
  margin-left: 5px;
  border: 1px solid #777;
  background: #eee;
}

.side-head button svg {
  width: 12px;
  height: 12px;
  fill: #555;
}

.side-body {
  flex: 1;
  min-height: 0;
  display: flex;
}

.side-tabs {
  display: flex;
  flex-direction: column;
  align-items: center;
  gap: 20px;
  width: 42px;
  padding: 8px 5px 0 0;
  border-right: 1px solid #666;
  background: #cdcdcd;
}

.thumbs {
  flex: 1;
  display: flex;
  flex-direction: column;
  padding: 0 3px 2px 4px;
}

.thumb-tools {
  display: flex;
  align-items: center;
  gap: 7px;
  height: 28px;
  padding-left: 2px;
}

.thumb-tools .menu {
  gap: 1px;
}

.thumb-tools .off {
  opacity: 0.6;
}

.thumb-list {
  flex: 1;
  border: 1px solid #666;
  background: #f4f4f4;
}

.list-ico {
  width: 18px;
  height: 16px;
}

.thumb {
  width: 136px;
  margin: 38px auto 0 37px;
  text-align: center;
}

.thumb-page {
  width: 100%;
  overflow: visible;
  background: #fff;
  border: 1px solid #000;
  border-right-width: 2px;
  box-shadow: 1px 1px 2px #888;
}

.thumb figcaption {
  padding-top: 8px;
  line-height: 14px;
}

/* линии чертежа */
.ink {
  fill: none;
  stroke: #000;
}

.ink path, .ink circle {
  vector-effect: non-scaling-stroke;
}

.ink .soft {
  stroke: #aaa;
}

.ink .pink {
  stroke: #f0f;
}

.ink .wide {
  stroke-width: 2;
}

.ink .dash {
  stroke-width: 2;
  stroke-dasharray: 3 1;
}

.ink .blur {
  stroke: #777;
  stroke-dasharray: 2 1;
}

/* документ */
.document {
  flex: 1;
  min-width: 0;
  display: flex;
  align-items: center;
}

.grip-col {
  width: 10px;
  flex: none;
}

.grip {
  display: block;
  width: 5px;
  height: 48px;
  background: repeating-linear-gradient(#888 0 1px, #333 1px 2px);
}

.page {
  flex: 1;
  min-width: 0;
  margin-right: 5px;
  background: #fff;
  box-shadow: -1px 0 #000;
}

.cad-text {
  font-size: 6px;
  font-style: italic;
  font-weight: bold;
}

.cad-text .tiny {
  font-size: 4px;
}

.cad-text .num {
  font-size: 6px;
  font-style: normal;
  font-weight: normal;
  fill: #999;
  text-anchor: middle;
}

.comment-text {
  font-family: "Open Sans", sans-serif;
  font-size: 11px;
  font-weight: 500;
  fill: #00f;
}

.parts {
  table-layout: fixed;
  width: 235px;
  border-collapse: collapse;
  font-size: 6px;
  line-height: 7px;
  color: #888;
}

.parts th, .parts td {
  height: 13px;
  padding: 0 3px;
  border: 1px solid #000;
  text-align: left;
  font-weight: normal;
  white-space: nowrap;
  overflow: hidden;
}

.parts th {
  height: 19px;
  padding: 0 1px;
  text-align: center;
}

.parts .tall td {
  height: 19px;
}

.parts b {
  color: #000;
}

.parts td:first-child, .parts td:nth-child(4) {
  text-align: center;
}

.c-pos {
  width: 18px;
}

.c-code {
  width: 67px;
}

.c-name {
  width: 91px;
}

.parts th:nth-child(4) {
  width: 13px;
}

.c-note {
  width: 45px;
}

.doc-scroll {
  align-self: stretch;
  display: flex;
  flex-direction: column;
  justify-content: space-between;
  width: 14px;
  padding-top: 7px;
  background: #fbf9f5;
}

.doc-scroll span {
  height: 14px;
  margin: 0 1px;
  border: 1px solid #ddd8cc;
}

/* комментарии */
.comments {
  flex: none;
  width: 340px;
  display: flex;
  flex-direction: column;
  border-left: 1px solid #333;
  background: #f5f5f5;
}

.panel-strip {
  display: flex;
  justify-content: flex-end;
  height: 17px;
  padding-right: 5px;
  border-bottom: 1px solid #555;
  background: linear-gradient(#b2b2b2, #999);
}

.panel-strip button {
  gap: 1px;
}

.strip-ico {
  width: 10px;
  height: 10px;
}

.fold {
  width: 100%;
  height: 26px;
  justify-content: flex-start;
  gap: 6px;
  padding: 0 0 2px 10px;
  border-bottom: 1px solid #666;
  background: linear-gradient(#ececec, #d2d2d2);
  font-family: "DejaVu Sans", sans-serif;
  font-size: 12px;
  font-weight: bold;
  color: #4a4a4a;
}

.fold::before {
  content: "";
  width: 7px;
  height: 7px;
  background: #444;
  clip-path: polygon(15% 0, 85% 50%, 15% 100%);
}

.fold.open::before {
  clip-path: polygon(0 15%, 100% 15%, 50% 85%);
}

.tool-grid {
  display: grid;
  grid-template-columns: repeat(6, 49px) 1fr;
  grid-auto-rows: 36px;
  align-items: center;
  justify-items: center;
  height: 100px;
  padding: 14px 0 0 13px;
  border-bottom: 1px solid #666;
  background: linear-gradient(#fff, #f1f1f1);
}

.tool-grid .pressed {
  width: 30px;
  height: 28px;
}

.tool-grid .drop {
  justify-self: start;
  margin-left: -12px;
}

.find-row {
  display: flex;
  align-items: center;
  gap: 9px;
  height: 30px;
  padding: 0 2px 0 5px;
  border-bottom: 1px solid #333;
}

.find {
  flex: 1;
  display: flex;
  align-items: center;
  height: 20px;
  padding-left: 3px;
  border: 1px solid #777;
  background: #fff;
}

.find svg {
  width: 16px;
  height: 16px;
}

.find input {
  flex: 1;
  min-width: 0;
  border: 0;
  padding: 0 4px;
  background: none;
}

.find-row button {
  gap: 1px;
}

.find-row .arrow {
  color: #777;
}

.az {
  font-size: 9px;
  line-height: 8px;
  font-weight: bold;
  color: #666;
}

.list-wrap {
  flex: 1;
  min-height: 0;
  display: flex;
  background: #fafafa;
  border-bottom: 1px solid #333;
}

.comment-list {
  flex: 1;
  overflow: hidden;
  list-style: none;
}

.comment-list li {
  height: 57px;
  padding: 4px 4px 0;
  border-bottom: 1px solid #444;
}

.comment-list h3 {
  display: flex;
  align-items: center;
  height: 18px;
}

.comment-list h3 svg:first-child {
  width: 16px;
  height: 16px;
  margin-right: 6px;
}

.comment-list h3 svg.t {
  width: 20px;
  height: 20px;
  margin: 0 4px 0 -2px;
  color: #3a3a3a;
}

.comment-list .arrow {
  margin-left: 4px;
}

.comment-list p {
  line-height: 16px;
}

.scroll {
  display: flex;
  flex-direction: column;
  width: 11px;
  border: solid #555;
  border-width: 0 1px;
  background: #c4c4c4;
}

.sb {
  display: flex;
  align-items: center;
  justify-content: center;
  height: 15px;
  background: #f4f4f4;
}

.sb::before {
  content: "";
  width: 7px;
  height: 4px;
  background: #555;
  clip-path: polygon(0 100%, 50% 0, 100% 100%);
}

.sb.down {
  margin-top: auto;
  border-top: 1px solid #555;
}

.sb.down::before {
  clip-path: polygon(0 0, 100% 0, 50% 100%);
}

.sb-thumb {
  display: flex;
  align-items: center;
  justify-content: center;
  height: 158px;
  border: solid #555;
  border-width: 1px 0;
  background: #fafafa;
}

.sb-thumb::before {
  content: "";
  width: 4px;
  height: 5px;
  background: repeating-linear-gradient(#555 0 1px, transparent 1px 2px);
}

/* плавающая панель */
.float-bar {
  position: absolute;
  left: 158px;
  top: 48px;
  width: 663px;
  border: 1px solid #777;
  background: linear-gradient(#f2f2f2, #d8d8d8);
}

.float-head {
  display: flex;
  align-items: center;
  justify-content: space-between;
  height: 18px;
  padding: 0 4px 0 2px;
}

.float-body {
  display: flex;
  align-items: center;
  height: 31px;
  padding-left: 9px;
}

.float-body .active {
  height: 31px;
  gap: 6px;
  width: 216px;
  border-right: 1px solid #fff;
  border-radius: 3px 3px 0 0;
  background: linear-gradient(#c6c6c6, #dedede);
}

.float-body .thin-sep {
  height: 22px;
  margin: 0 6px;
  background: #bbb;
}

.fi {
  width: 24px;
  height: 24px;
  color: #707070;
}

.float-body button:not(.active) {
  width: 34px;
}

.float-body .color {
  width: 44px;
  gap: 2px;
  margin-left: 5px;
}

.combo {
  display: grid;
  align-items: center;
  height: 21px;
  margin-left: 4px;
  border: 1px solid #aba898;
  border-radius: 3px;
  background: #fff;
}

.combo select, .combo svg {
  grid-area: 1 / 1;
}

.combo select {
  appearance: none;
  height: 19px;
  border: 0;
  padding: 0 3px;
  background: none;
}

.combo svg {
  justify-self: end;
  width: 10px;
  height: 8px;
  margin-right: 4px;
  pointer-events: none;
}

.combo.font {
  width: 178px;
  margin-left: 8px;
}

.combo.size {
  width: 56px;
}
```
